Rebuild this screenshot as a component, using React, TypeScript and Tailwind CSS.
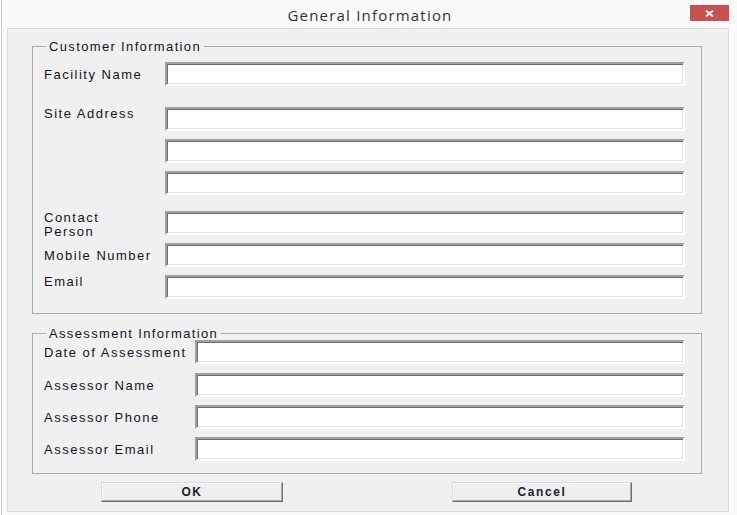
import type { ReactNode } from 'react';

// Sunken Win32-style edit box
function Field({ className = '' }: { className?: string }) {
    return (
        <div
            className={`h-[24px] flex-1 bg-white border-2 border-t-[#a0a0a0] border-l-[#a0a0a0] border-r-white border-b-white shadow-[inset_1px_1px_0_#6d6d6d,inset_-1px_-1px_0_#e3e3e3] ${className}`}
        />
    );
}

function Row({ label, labelWidth, pad, children, className = 'h-[24px]' }: { label: ReactNode; labelWidth: string; pad: string; children?: ReactNode; className?: string }) {
    return (
        <div className={`flex items-start ${className}`}>
            <div className={`${labelWidth} ${pad} shrink-0 text-[13px] leading-[14px] tracking-[1.5px] text-[#14141f]`}>{label}</div>
            {children ?? <Field />}
        </div>
    );
}

function DialogButton({ children, className = '' }: { children: ReactNode; className?: string }) {
    return (
        <button
            className={`h-[20px] bg-[#efefef] border border-t-[#dcdcdc] border-l-[#dcdcdc] border-r-[#6f6f6f] border-b-[#6f6f6f] shadow-[inset_-1px_-1px_0_#a8a8a8,inset_1px_1px_0_#fdfdfd] text-[12px] font-bold tracking-[1.6px] text-[#1c1c30] leading-none ${className}`}
        >
            {children}
        </button>
    );
}

export default function App() {
    return (
        <div className="w-[737px] h-[515px] bg-[#fafafa] border-l border-[#cfcfcf] ml-[1px] font-['Liberation_Sans',Arial,sans-serif] overflow-hidden">
            {/* Title bar */}
            <div className="relative h-[28px] flex items-center justify-center">
                <span className="font-['Open_Sans',sans-serif] text-[15px] tracking-[1.2px] text-[#333] pt-[2px]">General Information</span>
                <div className="absolute left-[688px] top-[5px] w-[39px] h-[16px] bg-[#c75050] flex items-center justify-center">
                    <svg width="9" height="7" viewBox="0 0 9 7">
                        <path d="M1 0.5 L8 6.5 M8 0.5 L1 6.5" stroke="#fff" strokeWidth="1.8" />
                    </svg>
                </div>
            </div>

            {/* Client area */}
            <div className="ml-[5px] w-[722px] h-[484px] bg-[#f0f0f0] border border-[#dadada] pt-[10px]">
                <fieldset className="ml-[24px] w-[670px] border border-[#acacac] pl-[11px] pr-[16px] pb-[14px]">
                    <legend className="ml-[2px] px-[3px] text-[13px] leading-[15px] tracking-[1.35px] text-[#14141f]">Customer Information</legend>
                    <div className="flex flex-col mt-[8px]">
                        <Row label="Facility Name" labelWidth="w-[121px]" pad="pt-[6px]" />
                        <Row label="Site Address" labelWidth="w-[121px]" pad="pt-0" className="mt-[21px]">
                            <div className="flex-1 flex flex-col gap-[8px]">
                                <Field className="flex-none" />
                                <Field className="flex-none" />
                                <Field className="flex-none" />
                            </div>
                        </Row>
                        <Row label={<>Contact<br />Person</>} labelWidth="w-[121px]" pad="pt-0" className="h-[24px] mt-[16px]" />
                        <Row label="Mobile Number" labelWidth="w-[121px]" pad="pt-[6px]" className="h-[24px] mt-[8px]" />
                        <Row label="Email" labelWidth="w-[121px]" pad="pt-0" className="h-[24px] mt-[8px]" />
                    </div>
                </fieldset>

                <fieldset className="ml-[24px] mt-[12px] w-[670px] border border-[#acacac] pl-[11px] pr-[16px] pb-[12px]">
                    <legend className="ml-[2px] px-[3px] text-[13px] leading-[15px] tracking-[1.35px] text-[#14141f]">Assessment Information</legend>
                    <div className="flex flex-col -mt-[1px]">
                        <Row label="Date of Assessment" labelWidth="w-[151px]" pad="pt-[6px]" />
                        <Row label="Assessor Name" labelWidth="w-[151px]" pad="pt-[6px]" className="h-[24px] mt-[9px]" />
                        <Row label="Assessor Phone" labelWidth="w-[151px]" pad="pt-[6px]" className="h-[24px] mt-[8px]" />
                        <Row label="Assessor Email" labelWidth="w-[151px]" pad="pt-[6px]" className="h-[24px] mt-[8px]" />
                    </div>
                </fieldset>

                <div className="flex mt-[8px] ml-[93px]">
                    <DialogButton className="w-[182px]">OK</DialogButton>
                    <DialogButton className="w-[180px] ml-[169px]">Cancel</DialogButton>
                </div>
            </div>
        </div>
    );
}
